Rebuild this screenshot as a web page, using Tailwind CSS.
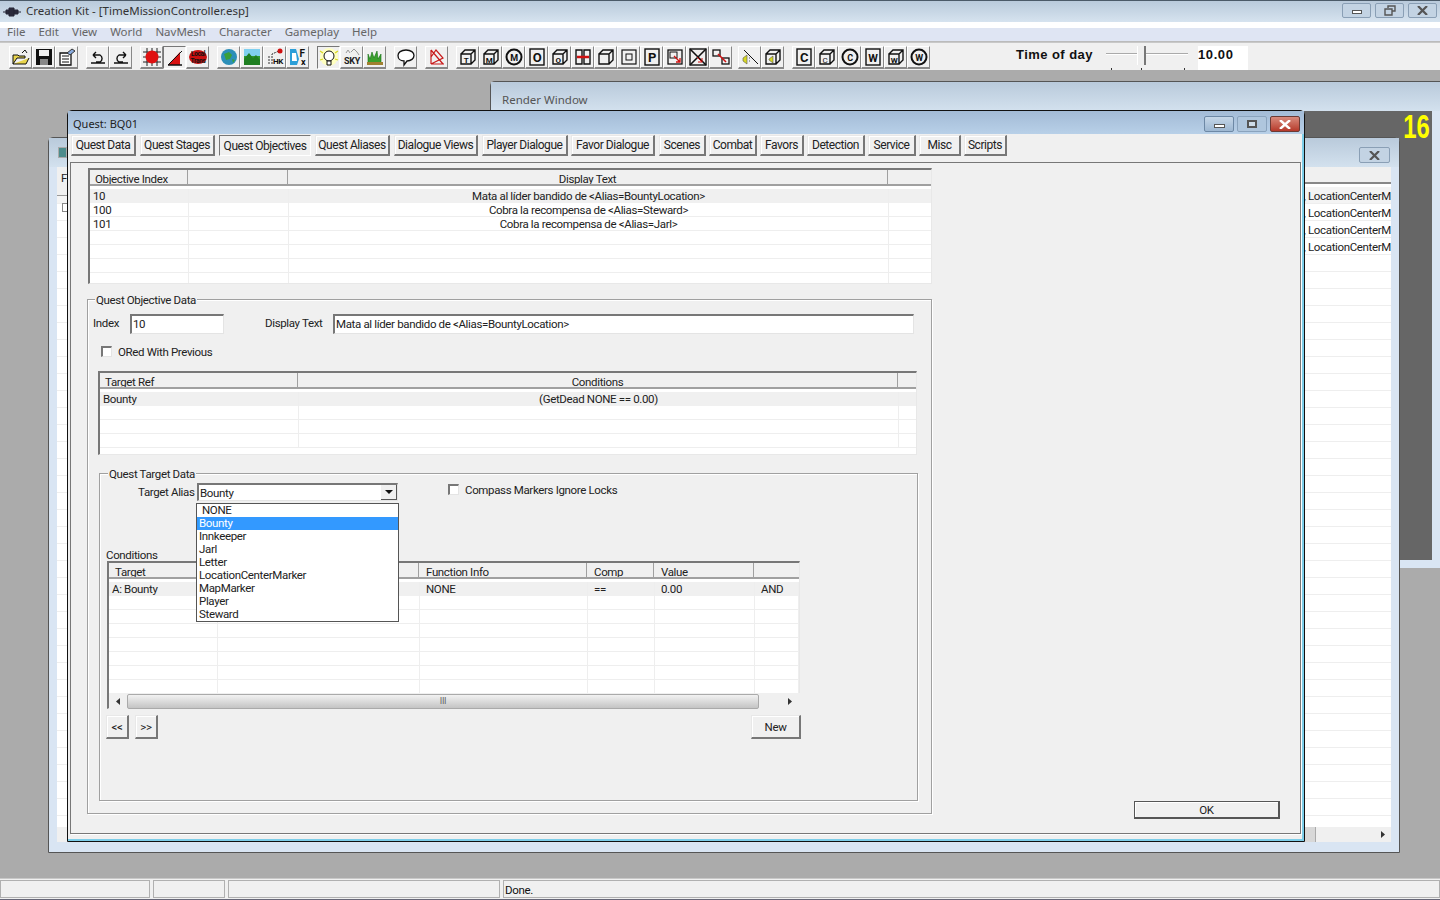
<!DOCTYPE html>
<html lang="en">
<head>
  <meta charset="UTF-8">
  <title>Creation Kit - Quest: BQ01</title>
  <script src="https://cdn.jsdelivr.net/npm/@tailwindcss/browser@4"></script>
</head>
<body class="w-[1440px] h-[900px] overflow-hidden flex flex-col bg-[#ababab] text-[11.5px] leading-[14px] tracking-[-.35px] whitespace-nowrap text-[#222] font-['Roboto',sans-serif]">

  <!-- Main title bar -->
  <div class="h-[22px] shrink-0 flex items-center border-t border-[#4b5a68] bg-gradient-to-b from-[#b9cadb] to-[#d6e3ef] pl-[3px]">
    <svg width="18" height="12" viewBox="0 0 18 12"><path d="M0 6h18M3 4h12v4H3zM6 2h5v8H6z" fill="#334" stroke="#223"/></svg>
    <span class="ml-[5px] mb-[2px] text-[11.5px] tracking-normal text-[#333] font-['Noto_Sans',sans-serif]">Creation Kit - [TimeMissionController.esp]</span>
    <div class="ml-auto mr-[3px] mb-[2px] flex gap-[4px]">
      <div class="w-[29px] h-[15px] rounded-[2px] border border-[#8a9fb5] bg-[#c3d3e3] flex items-center justify-center"><div class="w-[10px] h-[4px] mt-[3px] border border-[#555] bg-white"></div></div>
      <div class="w-[29px] h-[15px] rounded-[2px] border border-[#8a9fb5] bg-[#c3d3e3] flex items-center justify-center"><svg width="12" height="11" viewBox="0 0 12 11" fill="none" stroke="#555" stroke-width="1.4"><path d="M4 3V1h7v5H8M1 4h7v6H1z"/></svg></div>
      <div class="w-[29px] h-[15px] rounded-[2px] border border-[#8a9fb5] bg-[#c3d3e3] flex items-center justify-center"><svg width="11" height="9" viewBox="0 0 11 9" stroke="#555" stroke-width="2.2"><path d="M1 0l9 9M10 0L1 9"/></svg></div>
    </div>
  </div>

  <!-- Menu -->
  <div class="h-[20px] shrink-0 flex items-center gap-[13px] pl-[7px] bg-[linear-gradient(#fff_6px,#dfe5f3_6px)] text-[11.5px] tracking-normal text-[#666] font-['Noto_Sans',sans-serif] border-b border-[#bbb]">
    <span>File</span><span>Edit</span><span>View</span><span>World</span><span>NavMesh</span><span>Character</span><span>Gameplay</span><span>Help</span>
  </div>

  <!-- Toolbar -->
  <div class="h-[28px] shrink-0 flex items-start bg-[#f0f0f0] border-t border-[#c8c8c8] pt-[3px] pl-[9px]">
    <div id="toolbar" class="flex"></div>
    <span class="ml-[86px] w-[90px] mt-[2px] font-bold text-[13px] tracking-[.45px] text-[#111] font-['Liberation_Sans',sans-serif]">Time of day</span>
    <div class="relative w-[84px] h-[24px]">
      <div class="absolute left-0 top-[7px] w-[82px] h-[2px] bg-[#aaa] border-b border-white"></div>
      <div class="absolute left-[31px] top-0 w-[9px] h-[19px] bg-[#eee] border-r-2 border-[#777] border-l border-l-white"></div>
      <div class="absolute left-[5px] top-[22px] w-px h-[2px] bg-[#333]"></div>
      <div class="absolute left-[35px] top-[22px] w-px h-[2px] bg-[#333]"></div>
      <div class="absolute left-[78px] top-[22px] w-px h-[2px] bg-[#333]"></div>
    </div>
    <div class="ml-[8px] w-[50px] h-[24px] bg-white pt-[2px] font-bold text-[13px] tracking-[.6px] text-[#111] font-['Liberation_Sans',sans-serif]">10.00</div>
  </div>

  <!-- MDI client -->
  <div class="relative flex-1">

    <!-- Render window -->
    <div class="absolute left-[490px] top-[11px] w-[950px] h-[487px] rounded-tl-[5px] border-t border-l border-[#555] bg-[#d9e5f3] flex flex-col">
      <div class="h-[29px] shrink-0 pl-[11px] pt-[11px] bg-gradient-to-b from-[#b9cadb] to-[#d3e1ee] text-[11.5px] tracking-normal text-[#555] font-['Noto_Sans',sans-serif]">Render Window</div>
      <div class="flex-1 mr-[8px] mb-[8px] bg-[#666] flex justify-end items-start">
        <span class="mr-[2px] mt-[2px] text-[34px] leading-[26px] tracking-normal font-bold text-[#ffff00] font-['Liberation_Sans',sans-serif] scale-x-70 origin-right">16</span>
      </div>
    </div>

    <!-- Back window -->
    <div class="absolute left-[48px] top-[67px] w-[1352px] h-[716px] rounded-t-[5px] border border-[#555] bg-[#d9e5f3] flex flex-col">
      <div class="h-[29px] shrink-0 flex justify-end items-start pt-[9px] pr-[9px] pl-[9px] bg-gradient-to-b from-[#b9cadb] to-[#d3e1ee]">
        <div class="mr-auto w-[9px] h-[11px] bg-[#4d8c8c] border border-[#aaa]"></div>
        <div class="w-[31px] h-[16px] rounded-[2px] border border-[#8a9fb5] bg-[#c3d3e3] flex items-center justify-center"><svg width="11" height="9" viewBox="0 0 11 9" stroke="#555" stroke-width="2.2"><path d="M1 0l9 9M10 0L1 9"/></svg></div>
      </div>
      <div class="relative mx-[8px] mb-[10px] flex-1 bg-white overflow-hidden flex flex-col">
        <div class="h-[17px] shrink-0 bg-[#f0f0f0] border-b-2 border-[#888]"></div>
        <div id="backRows" class="mt-[3px]"></div>
        <div class="absolute left-0 top-0 w-[11px] h-[29px] bg-[#f0f0f0] border-b border-[#999] pl-[4px] pt-[4px]">F</div>
        <div class="absolute left-[5px] top-[36px] w-[9px] h-[9px] border border-[#888]"></div>
        <div class="absolute left-0 right-0 bottom-0 h-[15px] bg-[#f0f0f0] flex justify-end items-center pr-[6px]">
          <svg width="4" height="7" viewBox="0 0 4 7"><path d="M0 0l4 3.5L0 7z" fill="#333"/></svg>
        </div>
        <div class="absolute right-[75px] bottom-0 w-[12px] h-[15px] bg-[#d8d8d8] border-r border-[#aaa]"></div>
      </div>
    </div>

    <!-- Quest dialog -->
    <div class="absolute left-[67px] top-[40px] w-[1238px] h-[732px] rounded-t-[5px] border border-[#111] bg-[#f0f0f0] flex flex-col shadow-[inset_-2px_-2px_0_#7ccde8]">
      <div class="h-[23px] shrink-0 flex items-start pl-[5px] pt-[6px] bg-gradient-to-b from-[#a3bbd6] to-[#b8d0e8] text-[11px] tracking-normal text-[#222] font-['Noto_Sans',sans-serif]">
        <span>Quest: BQ01</span>
        <div class="ml-auto mr-[4px] -mt-px flex gap-[3px]">
          <div class="w-[30px] h-[16px] rounded-[2px] border border-[#6d88a5] bg-gradient-to-b from-[#c6d7e8] to-[#9db7d2] flex items-center justify-center"><div class="w-[11px] h-[4px] mt-[3px] border border-[#555] bg-white"></div></div>
          <div class="w-[30px] h-[16px] rounded-[2px] border border-[#8aa3bd] bg-[#afc6dd] flex items-center justify-center"><div class="w-[10px] h-[8px] border-2 border-[#555] bg-[#cfdde9]"></div></div>
          <div class="w-[30px] h-[16px] rounded-[2px] border border-[#6b3a34] bg-gradient-to-b from-[#d88a7c] to-[#b5382a] flex items-center justify-center"><svg width="12" height="9" viewBox="0 0 12 9" stroke="#fff" stroke-width="2.4"><path d="M1 0l10 9M11 0L1 9"/></svg></div>
        </div>
      </div>

      <!-- Tabs -->
      <div class="h-[28px] shrink-0 flex items-start gap-[3px] pl-[3px] pt-px text-[12px] tracking-[-.45px]">
        <div class="w-[65px] h-[21px] tab">Quest Data</div>
        <div class="ml-px w-[75px] h-[21px] tab">Quest Stages</div>
        <div class="ml-px w-[92px] h-[21px] flex items-center justify-center pt-px border-t border-l border-[#777] border-b border-b-white border-r border-r-white bg-[#f0f0f0]">Quest Objectives</div>
        <div class="ml-px w-[75px] h-[21px] tab">Quest Aliases</div>
        <div class="ml-px w-[84px] h-[21px] tab">Dialogue Views</div>
        <div class="ml-px w-[86px] h-[21px] tab">Player Dialogue</div>
        <div class="w-[84px] h-[21px] tab">Favor Dialogue</div>
        <div class="ml-px w-[47px] h-[21px] tab">Scenes</div>
        <div class="w-[48px] h-[21px] tab">Combat</div>
        <div class="w-[44px] h-[21px] tab">Favors</div>
        <div class="w-[58px] h-[21px] tab">Detection</div>
        <div class="w-[48px] h-[21px] tab">Service</div>
        <div class="w-[42px] h-[21px] tab">Misc</div>
        <div class="w-[43px] h-[21px] tab">Scripts</div>
      </div>

      <!-- Tab panel -->
      <div class="ml-[2px] w-[1231px] h-[672px] border border-[#777] shadow-[1px_1px_0_#fff] flex">
        <div class="w-[864px] shrink-0 pl-[17px]">
          <div id="objectives" class="mt-[5px] w-[844px] h-[116px]"></div>

          <!-- Quest Objective Data -->
          <div class="relative -ml-px mt-[15px] w-[845px] h-[515px] border border-[#a0a0a0] shadow-[inset_1px_1px_0_#fff,1px_1px_0_#fff]">
            <span class="absolute left-[7px] -top-[7px] bg-[#f0f0f0] px-px">Quest Objective Data</span>

            <div class="flex items-center mt-[14px] pl-[5px]">
              <span class="w-[37px] -mt-[2px]">Index</span>
              <div class="w-[94px] h-[20px] pl-px pt-px bg-white sunken">10</div>
              <span class="ml-[41px] w-[68px] -mt-[2px]">Display Text</span>
              <div class="w-[581px] h-[20px] pl-px pt-px bg-white sunken">Mata al líder bandido de &lt;Alias=BountyLocation&gt;</div>
            </div>

            <div class="flex items-center mt-[12px] ml-[13px] h-[11px]">
              <div class="w-[11px] h-[11px] bg-white sunken"></div>
              <span class="ml-[6px]">ORed With Previous</span>
            </div>

            <div id="targets" class="mt-[14px] ml-[10px] w-[819px] h-[84px]"></div>

            <!-- Quest Target Data -->
            <div class="relative mt-[18px] ml-[11px] w-[819px] h-[328px] border border-[#a0a0a0] shadow-[inset_1px_1px_0_#fff,1px_1px_0_#fff]">
              <span class="absolute left-[8px] -top-[7px] bg-[#f0f0f0] px-px">Quest Target Data</span>

              <div class="flex items-start mt-[9px] h-[18px]">
                <span class="ml-[38px] w-[59px] mt-[2px]">Target Alias</span>
                <div class="w-[201px] h-[18px] pl-px pt-px bg-white sunken relative">Bounty
                  <div class="absolute right-0 top-0 w-[16px] h-[15px] bg-[#f0f0f0] border-b border-r border-[#555] flex items-center justify-center"><svg width="8" height="4" viewBox="0 0 8 4"><path d="M0 0h8L4 4z" fill="#111"/></svg></div>
                </div>
                <div class="ml-[50px] mt-px w-[11px] h-[11px] bg-white sunken"></div>
                <span class="ml-[6px]">Compass Markers Ignore Locks</span>
              </div>

              <!-- open combo list -->
              <div class="absolute left-[96px] top-[29px] z-10 w-[203px] h-[119px] bg-white border border-[#555] flex flex-col leading-[12px]">
                <div class="h-[13px] pl-[5px] shrink-0">NONE</div>
                <div class="h-[13px] pl-[2px] shrink-0 bg-[#3399ff] text-white">Bounty</div>
                <div class="h-[13px] pl-[2px] shrink-0">Innkeeper</div>
                <div class="h-[13px] pl-[2px] shrink-0">Jarl</div>
                <div class="h-[13px] pl-[2px] shrink-0">Letter</div>
                <div class="h-[13px] pl-[2px] shrink-0">LocationCenterMarker</div>
                <div class="h-[13px] pl-[2px] shrink-0">MapMarker</div>
                <div class="h-[13px] pl-[2px] shrink-0">Player</div>
                <div class="h-[13px] pl-[2px] shrink-0">Steward</div>
              </div>

              <div class="ml-[6px] mt-[47px] h-[13px]">Conditions</div>
              <div class="relative ml-[7px] w-[693px] h-[148px]">
                <div id="conditions" class="h-[148px]"></div>
                <div class="absolute left-[2px] right-0 bottom-0 h-[16px] bg-[#f0f0f0] flex items-center">
                  <div class="w-[18px] flex justify-center"><svg width="4" height="7" viewBox="0 0 4 7"><path d="M4 0L0 3.5 4 7z" fill="#333"/></svg></div>
                  <div class="w-[632px] h-[15px] rounded-[2px] border border-[#aaa] bg-gradient-to-b from-[#f2f2f2] to-[#c4c4c4] flex justify-center items-center text-[#666] text-[9px]">III</div>
                  <div class="flex-1 flex justify-end pr-[8px]"><svg width="4" height="7" viewBox="0 0 4 7"><path d="M0 0l4 3.5L0 7z" fill="#333"/></svg></div>
                </div>
              </div>

              <div class="flex mt-[6px] ml-[6px] w-[695px] gap-[6px]">
                <div class="w-[23px] h-[24px] tab">&lt;&lt;</div>
                <div class="w-[23px] h-[24px] tab">&gt;&gt;</div>
                <div class="ml-auto w-[50px] h-[24px] tab">New</div>
              </div>
            </div>
          </div>
        </div>

        <!-- right side, only the OK button -->
        <div class="flex-1 flex items-end justify-end pr-[20px] pb-[14px]">
          <div class="w-[146px] h-[18px] border border-[#555] border-b-2 border-r-2 bg-[#f0f0f0] flex items-center justify-center shadow-[inset_1px_1px_0_#fff]">OK</div>
        </div>
      </div>
    </div>
  </div>

  <!-- Status bar -->
  <div class="h-[22px] shrink-0 bg-[#f0f0f0] pt-px flex gap-[3px] border-t border-[#c8c8c8] border-b border-b-[#667]">
    <div class="w-[150px] h-[18px] border border-[#b0b0b0]"></div>
    <div class="w-[72px] h-[18px] border border-[#b0b0b0]"></div>
    <div class="w-[272px] h-[18px] border border-[#b0b0b0]"></div>
    <div class="flex-1 h-[18px] border border-[#b0b0b0] pl-px pt-[2px] text-[#111]">Done.</div>
  </div>

  <script>
    // raised / sunken looks shared by tabs and fields
    const raised = 'flex items-center justify-center border-t border-l border-[#e8e8e8] border-b-2 border-r-2 border-b-[#777] border-r-[#777] bg-[#f0f0f0] shadow-[inset_1px_1px_0_#fff]';
    const inset = 'border-t-2 border-l-2 border-[#777] border-b border-r border-b-[#e4e4e4] border-r-[#e4e4e4]';
    document.querySelectorAll('.tab').forEach(el => { el.className += ' ' + raised; });
    document.querySelectorAll('.sunken').forEach(el => { el.className += ' ' + inset; });

    // list views
    function buildList(id, heads, cols, rows, total) {
      const el = document.getElementById(id);
      el.className += ' bg-white border-t-2 border-l-2 border-[#777] border-r border-b border-r-[#e8e8e8] border-b-[#e8e8e8] overflow-hidden';
      const head = document.createElement('div');
      head.className = 'flex h-[16px] bg-[#f0f0f0]';
      heads.forEach(h => {
        const c = document.createElement('div');
        c.className = 'h-[16px] pt-[2px] shrink-0 border-r border-b-2 border-[#a0a0a0] truncate';
        c.style.width = h.w + 'px';
        c.style.textAlign = h.center ? 'center' : 'left';
        c.style.paddingLeft = h.center ? '0' : (h.pad || 5) + 'px';
        c.textContent = h.t || '';
        head.appendChild(c);
      });
      el.appendChild(head);
      const body = document.createElement('div');
      body.className = 'mt-[3px]';
      for (let i = 0; i < total; i++) {
        const row = document.createElement('div');
        row.className = i === 0 ? 'flex h-[14px] bg-[#f0f0f0]' : 'flex h-[14px] border-b border-[#eeeeee]';
        cols.forEach((col, j) => {
          const c = document.createElement('div');
          c.className = 'shrink-0 border-r border-[#eeeeee] truncate';
          c.style.width = col.w + 'px';
          c.style.textAlign = col.center ? 'center' : 'left';
          c.style.paddingLeft = col.center ? '0' : (col.pad === undefined ? 2 : col.pad) + 'px';
          c.textContent = rows[i] ? (rows[i][j] || '') : '';
          row.appendChild(c);
        });
        body.appendChild(row);
      }
      el.appendChild(body);
    }

    buildList('objectives',
      [{ t: 'Objective Index', w: 98 }, { w: 100 }, { t: 'Display Text', w: 600, center: true }, { w: 44 }],
      [{ w: 99, pad: 3 }, { w: 100 }, { w: 600, center: true }, { w: 43 }],
      [['10', '', 'Mata al líder bandido de <Alias=BountyLocation>'],
       ['100', '', 'Cobra la recompensa de <Alias=Steward>'],
       ['101', '', 'Cobra la recompensa de <Alias=Jarl>']], 7);

    buildList('targets',
      [{ t: 'Target Ref', w: 198 }, { t: 'Conditions', w: 600, center: true }, { w: 19 }],
      [{ w: 199, pad: 3 }, { w: 600, center: true }, { w: 18 }],
      [['Bounty', '(GetDead NONE == 0.00)']], 4);

    buildList('conditions',
      [{ t: 'Target', w: 109, pad: 6 }, { w: 201 }, { t: 'Function Info', w: 168, pad: 7 }, { t: 'Comp', w: 67, pad: 7 }, { t: 'Value', w: 100, pad: 7 }, { w: 46 }],
      [{ w: 109, pad: 3 }, { w: 202 }, { w: 168, pad: 6 }, { w: 67, pad: 6 }, { w: 100, pad: 6 }, { w: 44, pad: 6 }],
      [['A: Bounty', '', 'NONE', '==', '0.00', 'AND']], 8);

    // rows of the window behind the dialog
    const back = document.getElementById('backRows');
    for (let i = 0; i < 37; i++) {
      const r = document.createElement('div');
      r.className = i === 0 ? 'h-[17px] pt-[2px] border-b border-[#eeeeee] bg-[#f4f4f4] text-right overflow-hidden' : 'h-[17px] pt-[2px] border-b border-[#eeeeee] text-right overflow-hidden';
      if (i < 4) r.textContent = ', LocationCenterM';
      back.appendChild(r);
    }

    // toolbar icons, drawn in a 20x20 box
    const cube = inner => `<path d="M3 7h10v10H3zM3 7l4-4h10v10l-4 4M13 7l4-4" fill="none" stroke="#111" stroke-width="1.4"/>${inner}`;
    const box = letter => `<rect x="3" y="2" width="14" height="16" fill="none" stroke="#111" stroke-width="1.4"/><text x="10" y="15" text-anchor="middle" font-size="13" font-weight="bold" fill="#111">${letter}</text>`;
    const ring = letter => `<circle cx="10" cy="10" r="7.5" fill="none" stroke="#111" stroke-width="2"/><text x="10" y="13.5" text-anchor="middle" font-size="9" font-weight="bold" fill="#111">${letter}</text>`;
    const label = letter => `<text x="8" y="15.5" text-anchor="middle" font-size="8" font-weight="bold" fill="#111">${letter}</text>`;
    const icons = [
      { svg: '<path d="M2 17V8h5l1 1h6v2H6l-4 6h13l3-6" fill="#e8d44c" stroke="#111"/><path d="M11 6l3-3 2 3" fill="none" stroke="#111"/>' },
      { svg: '<path d="M2 2h16v16H2z" fill="#111"/><rect x="5" y="3" width="10" height="6" fill="#eee"/><rect x="6" y="12" width="8" height="6" fill="#888"/>' },
      { svg: '<path d="M3 6h11v12H3z" fill="#fff" stroke="#111" stroke-width="1.3"/><path d="M5 9h7M5 12h7M5 15h7" stroke="#111"/><path d="M10 6l5-4 3 2-5 4z" fill="#8ad" stroke="#333"/>' },
      { gap: 8, svg: '<path d="M3 16h14M5 8h7a4 4 0 0 1 0 7H8M5 8l3-3M5 8l3 3" fill="none" stroke="#111" stroke-width="1.4"/>' },
      { svg: '<path d="M3 16h14M15 8H8a4 4 0 0 0 0 7h4M15 8l-3-3M15 8l-3 3" fill="none" stroke="#111" stroke-width="1.4"/>' },
      { gap: 8, svg: '<path d="M1 5h18M1 10h18M1 15h18M5 1v18M10 1v18M15 1v18" stroke="#222"/><circle cx="10" cy="10" r="6.500" fill="#e01010"/>' },
      { pressed: true, svg: '<path d="M3 17L15 4v13z" fill="#d81010"/><path d="M3 17L17 3" stroke="#111"/><path d="M3 17h14" stroke="#111" stroke-width="1.5"/>' },
      { svg: '<ellipse cx="10" cy="10" rx="9" ry="7" fill="#c81010"/><text x="10" y="9" text-anchor="middle" font-size="6.5" font-weight="bold" fill="#111">Local</text><text x="10" y="16" text-anchor="middle" font-size="6.5" font-weight="bold" fill="#111">Trans</text>' },
      { gap: 8, svg: '<circle cx="10" cy="10" r="8" fill="#2c8fb8"/><path d="M5 7l5-2 3 3-2 4-4 1z" fill="#3aa03a"/><path d="M13 12l3 1-2 3z" fill="#3aa03a"/>' },
      { svg: '<rect x="2" y="2" width="16" height="7" fill="#7fd0f0"/><rect x="2" y="9" width="16" height="9" fill="#2f9a30"/><path d="M2 12l5-6 4 5 3-3 4 5v5H2z" fill="#1f7f22"/>' },
      { svg: '<path d="M4 17V9M7 17V7l7-3" fill="none" stroke="#333" stroke-dasharray="2 1"/><circle cx="15" cy="4" r="2.500" fill="#d01010"/><text x="13" y="17" text-anchor="middle" font-size="8" font-weight="bold" fill="#111">HK</text>' },
      { svg: '<path d="M2 2h6l3 10-2 6H2z" fill="#2c9fd8"/><path d="M4 6h4l1 8H4z" fill="#fff"/><text x="14" y="10" font-size="10" font-weight="bold" fill="#111" text-anchor="middle">F</text><text x="15" y="18" font-size="9" font-weight="bold" fill="#111" text-anchor="middle">x</text>' },
      { gap: 8, pressed: true, svg: '<circle cx="10" cy="9" r="9" fill="#ffffc0"/><circle cx="10" cy="8" r="5" fill="#fff" stroke="#111"/><path d="M8 13h4v4H8z" fill="#fff" stroke="#111"/><path d="M1 3l3 2M19 3l-3 2M1 12l3-1M19 12l-3-1" stroke="#d8d820" stroke-width="1.3"/>' },
      { svg: '<path d="M4 6l2-3 2 3M9 5l3-3 3 3 2 3" fill="none" stroke="#999"/><text x="10" y="17" text-anchor="middle" font-size="9" font-weight="bold" fill="#222">SKY</text>' },
      { svg: '<path d="M3 16V7l2 5 2-7 2 6 3-7 1 8 3-5v9z" fill="#3aa02c" stroke="#146e14" stroke-width=".6"/><path d="M2 15h16v3H2z" fill="#a08030"/>' },
      { gap: 8, svg: '<path d="M10 3c5 0 8 2.500 8 5.500S15 14 11 14l-3 4v-4C4 14 2 11.500 2 8.500S5 3 10 3z" fill="#fff" stroke="#111" stroke-width="1.3"/>' },
      { gap: 8, svg: '<path d="M4 17V3M4 17h13M4 3l12 14M4 10l5-7 7 8-12 6" fill="none" stroke="#c81818" stroke-width="1.2"/>' },
      { gap: 8, svg: cube(label('T')) },
      { svg: cube(label('M')) },
      { svg: ring('M') },
      { svg: box('O') },
      { svg: cube(label('O')) },
      { svg: '<path d="M3 3h6v14H3zM11 3h6v14h-6z" fill="none" stroke="#111" stroke-width="1.4"/><path d="M4 10h12" stroke="#d01010" stroke-width="2.5"/>' },
      { svg: cube('') },
      { svg: '<rect x="3" y="3" width="14" height="14" fill="none" stroke="#111" stroke-width="1.2"/><rect x="7" y="7" width="6" height="6" fill="none" stroke="#111"/>' },
      { svg: box('P') },
      { svg: '<rect x="3" y="3" width="14" height="14" fill="none" stroke="#111" stroke-width="1.3"/><rect x="5" y="5" width="7" height="6" fill="none" stroke="#111"/><path d="M9 9l6 6M15 11v4h-4" fill="none" stroke="#d01010" stroke-width="1.3"/>' },
      { svg: '<rect x="2" y="2" width="16" height="16" fill="none" stroke="#111" stroke-width="1.4"/><path d="M2 2l16 16M18 2L2 18" stroke="#111" stroke-width="1.6"/><path d="M9 10l5 5M14 11v4h-4" fill="none" stroke="#d01010"/>' },
      { svg: '<rect x="2" y="3" width="7" height="6" fill="none" stroke="#111" stroke-width="1.3"/><rect x="11" y="11" width="7" height="6" fill="none" stroke="#111" stroke-width="1.3"/><path d="M7 7l8 8" stroke="#d01010" stroke-width="1.6"/>' },
      { gap: 6, svg: '<path d="M4 3l14 14" stroke="#111"/><path d="M3 11l4-3v9l-4-3z" fill="#d8d820" stroke="#555" stroke-width=".6"/><path d="M9 11h1M9 14h1" stroke="#555"/>' },
      { svg: cube('<path d="M6 12l4-3v7l-4-3z" fill="#d8d820" stroke="#555" stroke-width=".6"/>') },
      { gap: 8, svg: box('C') },
      { svg: cube(label('C').replace('font-weight="bold"', '')) },
      { svg: ring('C') },
      { svg: box('W').replace('font-size="13"', 'font-size="11"') },
      { svg: cube(label('W')) },
      { svg: ring('W') }
    ];
    const bar = document.getElementById('toolbar');
    icons.forEach(ic => {
      const b = document.createElement('div');
      b.className = ic.pressed
        ? 'w-[23px] h-[23px] shrink-0 flex items-center justify-center border-t border-l border-[#777] border-b border-r border-b-white border-r-white'
        : 'w-[23px] h-[23px] shrink-0 flex items-center justify-center border-t border-l border-white border-b-2 border-r border-b-[#888] border-r-[#888]';
      if (ic.gap) b.style.marginLeft = ic.gap + 'px';
      b.innerHTML = `<svg width="20" height="20" viewBox="0 0 20 20">${ic.svg}</svg>`;
      bar.appendChild(b);
    });
  </script>
</body>
</html>
